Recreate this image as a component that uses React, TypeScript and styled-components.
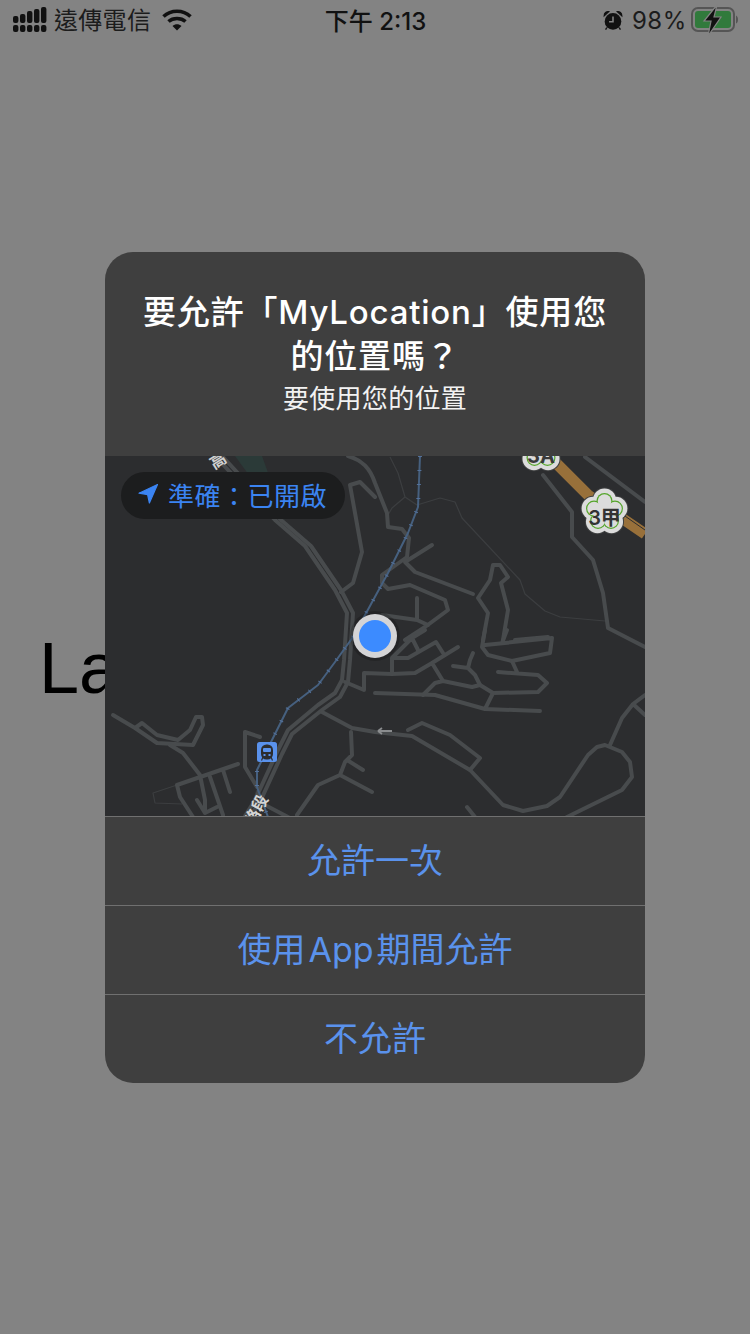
import React from 'react';
import styled, { createGlobalStyle } from 'styled-components';

const GlobalStyle = createGlobalStyle`
  html, body {
    margin: 0;
    padding: 0;
    background: #838383;
  }
`;

const CJK = `Inter, "Noto Sans CJK TC", sans-serif`;

const Screen = styled.div`
  position: relative;
  width: 750px;
  height: 1334px;
  overflow: hidden;
  background: #838383;
  font-family: ${CJK};
`;

const StatusBar = styled.div`
  display: flex;
  align-items: center;
  justify-content: space-between;
  height: 40px;
  padding: 0 12px 0 13px;
  color: #111;
`;

const StatusSide = styled.div`
  display: flex;
  align-items: center;
  width: 260px;
  justify-content: ${(p: { $end?: boolean }) => (p.$end ? 'flex-end' : 'flex-start')};
`;

const Carrier = styled.span`
  margin: 0 11px 3px 7px;
  font-size: 24px;
  letter-spacing: 0.3px;
  color: #1c1c1c;
`;

const Clock = styled.span`
  margin-bottom: 2px;
  font-size: 24px;
  font-weight: 500;
`;

const Percent = styled.span`
  margin: 0 4px 0 9px;
  font-size: 24px;
  letter-spacing: 0.6px;
  color: #1c1c1c;
`;

const PageBody = styled.div`
  padding: 588px 0 0 39px;
  font-size: 72px;
  line-height: 80px;
  color: #000;
  font-family: "Liberation Sans", sans-serif;
`;

const Overlay = styled.div`
  position: absolute;
  inset: 1px 0 0;
  display: flex;
  align-items: center;
  justify-content: center;
`;

const Dialog = styled.div`
  display: flex;
  flex-direction: column;
  width: 540px;
  height: 831px;
  border-radius: 28px;
  overflow: hidden;
  background: #3f3f3f;
`;

const DialogHeader = styled.div`
  display: flex;
  flex-direction: column;
  align-items: center;
  height: 204px;
  padding: 38px 30px 0;
  box-sizing: border-box;
  text-align: center;
  color: #fff;
`;

const Title = styled.div`
  font-size: 33px;
  line-height: 44px;
  font-weight: 500;
  letter-spacing: 0.8px;
`;

const Subtitle = styled.div`
  font-size: 26px;
  line-height: 42px;
  letter-spacing: 0.3px;
  color: #f2f2f2;
`;

const MapArea = styled.div`
  position: relative;
  height: 360px;
  background: #2c2d2f;
  overflow: hidden;

  svg {
    display: block;
  }
`;

const AccuracyPill = styled.div`
  position: absolute;
  top: 16px;
  left: 16px;
  display: flex;
  align-items: center;
  gap: 9px;
  height: 47px;
  padding: 0 18px 3px 16px;
  box-sizing: border-box;
  border-radius: 24px;
  background: #1c1d1e;
  color: #3b84f2;
  font-size: 26px;
  letter-spacing: 0.5px;
`;

const ActionButton = styled.button`
  height: 89px;
  padding: 0 0 6px;
  border: 0;
  border-top: 1px solid #707070;
  background: transparent;
  color: #5a92ec;
  font-family: ${CJK};
  font-size: 34px;
  cursor: pointer;
`;

const LatinWord = styled.span`
  margin: 0 3px;
`;

const SignalIcon = () => (
  <svg width="34" height="28" viewBox="0 0 34 28" fill="#111">
    <rect x="0" y="19" width="5.4" height="7" rx="2" />
    <rect x="7" y="19" width="5.4" height="7" rx="2" />
    <rect x="14" y="19" width="5.4" height="7" rx="2" />
    <rect x="21" y="19" width="5.4" height="7" rx="2" />
    <rect x="28" y="19" width="5.4" height="7" rx="2" />
    <rect x="0" y="10" width="5.4" height="7" rx="2" />
    <rect x="7" y="8" width="5.4" height="9" rx="2" />
    <rect x="14" y="5" width="5.4" height="12" rx="2" />
    <rect x="21" y="3" width="5.4" height="14" rx="2" />
    <rect x="28" y="1" width="5.4" height="16" rx="2" />
  </svg>
);

const WifiIcon = () => (
  <svg width="30" height="24" viewBox="0 0 30 24" fill="none" stroke="#111" strokeWidth="3.6">
    <path d="M1.5 8.5C9 1.5 21 1.5 28.5 8.5" />
    <path d="M6.5 13.5C11 9.5 19 9.5 23.5 13.5" />
    <path d="M15 22.5L10.5 18C13 15.8 17 15.8 19.5 18Z" fill="#111" stroke="none" />
  </svg>
);

const AlarmIcon = () => (
  <svg width="20" height="21" viewBox="0 0 22 24">
    <circle cx="11" cy="13" r="9.5" fill="#111" />
    <path d="M1 6.5C1 3.5 3.5 1.5 6 2ZM21 6.5C21 3.5 18.5 1.5 16 2Z" fill="#111" stroke="#111" strokeWidth="1.5" />
    <path d="M11 7.5V13.5H6.5" fill="none" stroke="#838383" strokeWidth="1.8" />
    <path d="M4 20L2.5 22.5M18 20L19.5 22.5" stroke="#111" strokeWidth="1.6" />
  </svg>
);

const BatteryIcon = () => (
  <svg width="47" height="32" viewBox="0 0 47 32">
    <rect x="1" y="4" width="42" height="23" rx="6" fill="none" stroke="#555" strokeWidth="2" />
    <rect x="4" y="7" width="36" height="17" rx="3" fill="#317a3c" />
    <path d="M45 11.5C46.5 12 47 14 47 15.5C47 17 46.5 19 45 19.5Z" fill="#555" />
    <path d="M26 1L13 17H20L17 32L30 13H23Z" fill="#111" stroke="#838383" strokeWidth="1.2" />
  </svg>
);

const NavArrow = () => (
  <svg width="22" height="22" viewBox="0 0 22 22" fill="#3b84f2" stroke="#3b84f2" strokeWidth="1.2" strokeLinejoin="round">
    <path d="M20.5 1.5L2 10.2L10.6 11.6L12.4 20Z" />
  </svg>
);

const TrainBadge = () => (
  <g>
    <rect x="257" y="742" width="20" height="20" rx="2.5" fill="#5a92ec" />
    <rect x="261" y="744.5" width="12" height="15" rx="5.5" fill="#2c2d2f" />
    <rect x="263" y="748" width="8" height="4" rx="1" fill="#5a92ec" />
    <rect x="263.5" y="754" width="2" height="2" fill="#5a92ec" />
    <rect x="268.5" y="754" width="2" height="2" fill="#5a92ec" />
    <path d="M263 757L261.5 760.5M271 757L272.5 760.5" stroke="#2c2d2f" strokeWidth="1.2" />
  </g>
);

const Flower = ({ cx, cy }: { cx: number; cy: number }) => {
  const layer = (d: number, r: number, fill: string) => (
    <g fill={fill}>
      {[0, 72, 144, 216, 288].map((deg) => {
        const a = ((deg - 90) * Math.PI) / 180;
        return <circle key={deg} cx={cx + d * Math.cos(a)} cy={cy + d * Math.sin(a)} r={r} />;
      })}
      <circle cx={cx} cy={cy} r={d + r - 8} />
    </g>
  );
  return (
    <g>
      {layer(12, 12.5, '#3f4041')}
      {layer(12, 11.5, '#dcdcdc')}
      {layer(11, 8, '#55a52b')}
      {layer(11, 6.8, '#dcdcdc')}
    </g>
  );
};

const roadPaths = [
  // main road, drawn twice
  'M215 456L275 520L305 546L335 590L347 613L344 660L342 680L335 693L318 705L288 730L278 750L255 800L245 816',
  'M222 456L281 520L311 546L341 590L353 613L350 660L348 682L340 697L322 710L292 734L282 754L260 802L250 816',
  // hillside streets
  'M341 592L353 583L362 552L350 485L360 482L375 497',
  'M348 456C362 460 370 468 375 483L387 513L388 527L402 529L409 538L407 557L382 575L382 583L388 589L410 585L445 600L448 610L425 627L405 640',
  'M405 562L432 545M405 562L415 572L473 594M417 598V620M382 615L417 620L428 625',
  'M543 475L572 512V537L593 560L603 593L608 628L645 647M585 457L645 502',
  'M515 640L548 637M493 565L490 580L478 598L488 613L483 640M493 565H500L508 577L501 583L508 610L503 640',
  'M485 630L482 647L488 655L512 661L550 653L552 638L485 645M507 630L502 643',
  'M512 661L517 672M498 672L538 675L547 683L538 692L493 693L485 709M540 711L485 709L435 695L375 693',
  'M423 695L435 683L443 681L472 687L480 685L493 693M443 681L432 663L458 647M432 663L415 673L392 674L364 673V690L345 682M392 674V658H408L436 642L443 653M392 658L412 638L418 650M412 638L425 630',
  'M453 666L468 668L475 675L480 685M468 668L470 660L473 653',
  // lower road and loop
  'M322 712L352 728L375 732L412 736L470 770L503 805L523 811L547 806L560 797L588 755L597 747L605 745L622 752L630 762L632 777L622 790L567 817',
  'M408 730L422 723L450 735L480 758L470 770M610 745L622 718L633 704L645 695M633 704L645 715M467 807L475 817',
  // left neighbourhood
  'M113 715L135 728L157 743L193 745L203 725L202 717L196 717L190 730L178 740L157 735L142 723L135 728',
  'M170 745L183 753L200 775L205 800L205 813M177 785L238 764M177 785L180 797L193 817M210 777L223 815M223 770L230 792M197 800L205 813L217 807',
  'M260 737L245 732V767L257 787M265 805L288 817M297 815L318 785L340 775L372 792M340 775L345 762L352 755L351 732M347 760L363 770',
];

const thinPaths = [
  'M390 457L398 473L405 497L417 505L440 498L455 502L462 518L520 580L525 594L545 611L560 617L605 621',
  'M405 497L392 508L388 515',
  'M177 785L153 793L155 803L182 804',
  'M248 816L257 790',
];

const railPath = 'M420 456L418 507L408 533L388 573L353 637L335 662L318 685L288 708L272 740L257 770V787L268 817';

const MapDrawing = () => (
  <svg width="540" height="360" viewBox="105 456 540 360" fill="none" strokeLinejoin="round">
    <path d="M235 456L262 456L285 520L278 515Z" fill="#2b3a38" />
    <g strokeWidth="1.2">
      {thinPaths.map((d) => (
        <path key={d} d={d} stroke="#3c3e40" />
      ))}
    </g>
    <g stroke="#484b4d" strokeWidth="4" strokeLinecap="round">
      {roadPaths.map((d) => (
        <path key={d} d={d} />
      ))}
    </g>
    <path d={railPath} stroke="#46607f" strokeWidth="2" />
    <path d={railPath} stroke="#54719a" strokeWidth="4" strokeDasharray="1 13" />
    <path d="M553 460L588 495L645 534" stroke="#98703a" strokeWidth="11" />
    <path d="M622 514L645 530" stroke="#2c2d2f" strokeWidth="1" />
    <path d="M392 731H378M378 731L382 728M378 731L382 734" stroke="#8a8c8e" strokeWidth="1.8" />
    <Flower cx={541} cy={449} />
    <text x="541" y="463" textAnchor="middle" fontSize="20" fontWeight="700" fill="#3a3a3a" fontFamily={CJK}>
      3A
    </text>
    <Flower cx={604.5} cy={512} />
    <text x="604.5" y="525" textAnchor="middle" fontSize="20" fontWeight="600" fill="#333" fontFamily={CJK}>
      3甲
    </text>
    <text x="219" y="466" textAnchor="middle" fontSize="16" fontWeight="600" fill="#cfcfcf" fontFamily={CJK} transform="rotate(-32 219 462)">
      高
    </text>
    <text x="256" y="816" textAnchor="middle" fontSize="16" fontWeight="700" fill="#d4d4d4" fontFamily={CJK} transform="rotate(-62 256 810)">
      路段
    </text>
    <TrainBadge />
    <circle cx="375" cy="636" r="25" fill="#000" opacity="0.18" />
    <circle cx="375" cy="636" r="22" fill="#d4d4d6" />
    <circle cx="375" cy="636" r="16" fill="#3c8bff" />
  </svg>
);

export default function App() {
  return (
    <Screen>
      <GlobalStyle />
      <StatusBar>
        <StatusSide>
          <SignalIcon />
          <Carrier>遠傳電信</Carrier>
          <WifiIcon />
        </StatusSide>
        <Clock>下午 2:13</Clock>
        <StatusSide $end>
          <AlarmIcon />
          <Percent>98%</Percent>
          <BatteryIcon />
        </StatusSide>
      </StatusBar>
      <PageBody>Label</PageBody>
      <Overlay>
        <Dialog>
          <DialogHeader>
            <Title>要允許「MyLocation」使用您的位置嗎？</Title>
            <Subtitle>要使用您的位置</Subtitle>
          </DialogHeader>
          <MapArea>
            <MapDrawing />
            <AccuracyPill>
              <NavArrow />
              準確：已開啟
            </AccuracyPill>
          </MapArea>
          <ActionButton>允許一次</ActionButton>
          <ActionButton>
            使用<LatinWord>App</LatinWord>期間允許
          </ActionButton>
          <ActionButton>不允許</ActionButton>
        </Dialog>
      </Overlay>
    </Screen>
  );
}
